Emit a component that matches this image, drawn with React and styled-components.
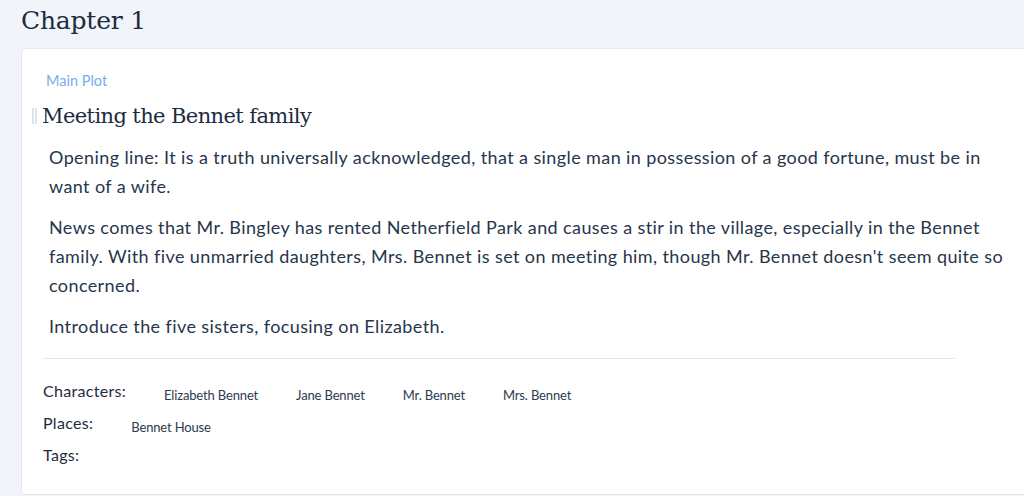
import React from 'react';
import styled, { createGlobalStyle } from 'styled-components';

const GlobalStyle = createGlobalStyle`
  html, body {
    margin: 0;
    padding: 0;
    background: #f1f5f9;
    overflow: hidden;
  }
  body {
    font-family: Lato, "Open Sans", sans-serif;
    font-variant-ligatures: none;
    color: #27364b;
  }
`;

const Page = styled.main`
  width: 1060px;
  padding: 0 0 0 21px;
  box-sizing: border-box;
`;

const ChapterTitle = styled.h1`
  margin: 0;
  padding-top: 4px;
  height: 44px;
  font-family: "DejaVu Serif", serif;
  font-weight: 400;
  font-size: 25px;
  line-height: 34px;
  color: #1e2b3f;
  letter-spacing: -0.2px;
`;

const Card = styled.section`
  background: #ffffff;
  border: 1px solid #e4e7eb;
  border-radius: 4px;
  padding: 22px 20px 27px 20px;
  box-sizing: border-box;
  width: 1030px;
`;

const Category = styled.div`
  padding-left: 4px;
  font-size: 14.5px;
  line-height: 20px;
  color: #78aee8;
`;

const TitleRow = styled.div`
  display: flex;
  align-items: center;
  margin-top: 10px;
  margin-left: -10px;
`;

const Handle = styled.span`
  width: 1px;
  height: 16px;
  border-left: 2px solid #dbe3ec;
  border-right: 2px solid #dbe3ec;
  margin-right: 5px;
`;

const Title = styled.h2`
  margin: 0;
  font-family: "DejaVu Serif", serif;
  font-weight: 400;
  font-size: 21px;
  line-height: 30px;
  color: #1e2b3f;
  letter-spacing: -0.6px;
`;

const Body = styled.div`
  padding: 12px 0 0 7px;
  width: 960px;
`;

const Para = styled.p`
  margin: 0 0 12px 0;
  font-size: 18px;
  line-height: 29px;
  letter-spacing: 0.4px;
  color: #27364b;
`;

const Divider = styled.hr`
  border: 0;
  border-top: 1px solid #e2e8ef;
  margin: 17px 0 0 1px;
  width: 912px;
`;

const Meta = styled.div`
  padding-top: 20px;
  display: flex;
  flex-direction: column;
  gap: 8px;
  padding-left: 1px;
`;

const MetaRow = styled.div`
  display: flex;
  align-items: baseline;
  height: 24px;
`;

const MetaLabel = styled.span`
  font-size: 16px;
  line-height: 24px;
  letter-spacing: 0.3px;
  color: #1e2b3f;
  margin-right: 19px;
`;

const Chip = styled.span`
  font-size: 13px;
  line-height: 20px;
  letter-spacing: -0.15px;
  color: #2d3b4e;
  padding: 0 19px;
  position: relative;
  top: 3px;
`;

const meta = [
  { label: 'Characters:', items: ['Elizabeth Bennet', 'Jane Bennet', 'Mr. Bennet', 'Mrs. Bennet'] },
  { label: 'Places:', items: ['Bennet House'] },
  { label: 'Tags:', items: [] },
];

export default function App() {
  return (
    <>
      <GlobalStyle />
      <Page>
        <ChapterTitle>Chapter 1</ChapterTitle>
        <Card>
          <Category>Main Plot</Category>
          <TitleRow>
            <Handle />
            <Title>Meeting the Bennet family</Title>
          </TitleRow>
          <Body>
            <Para>
              Opening line: It is a truth universally acknowledged, that a single man in possession of a good fortune, must be in want of a wife.
            </Para>
            <Para>
              News comes that Mr. Bingley has rented Netherfield Park and causes a stir in the village, especially in the Bennet family. With five unmarried daughters, Mrs. Bennet is set on meeting him, though Mr. Bennet doesn't seem quite so concerned.
            </Para>
            <Para>Introduce the five sisters, focusing on Elizabeth.</Para>
          </Body>
          <Divider />
          <Meta>
            {meta.map(row => (
              <MetaRow key={row.label}>
                <MetaLabel>{row.label}</MetaLabel>
                {row.items.map(item => (
                  <Chip key={item}>{item}</Chip>
                ))}
              </MetaRow>
            ))}
          </Meta>
        </Card>
      </Page>
    </>
  );
}
